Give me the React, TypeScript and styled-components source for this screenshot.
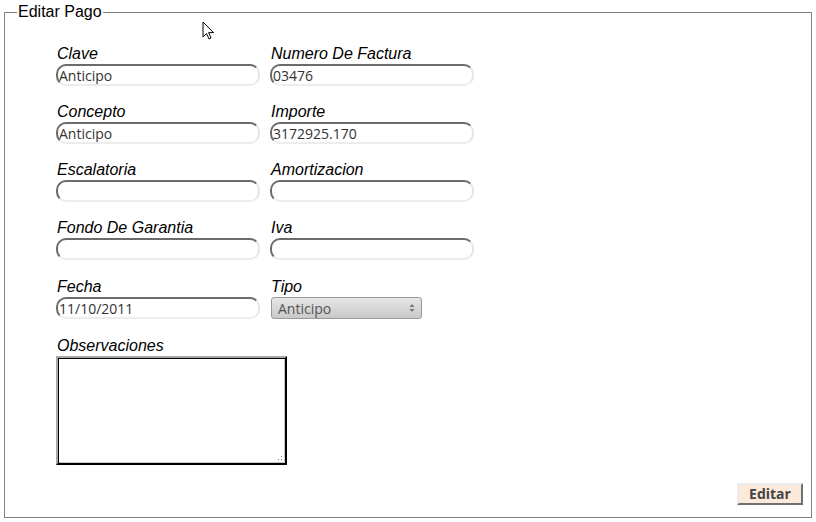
import React from "react";
import styled, { createGlobalStyle } from "styled-components";

const Global = createGlobalStyle`
  html, body { margin: 0; padding: 0; background: #fff; }
  body { font-family: "Liberation Sans", Arial, sans-serif; }
`;

const Page = styled.div`
  position: relative;
  width: 816px;
  height: 522px;
  padding: 3px 4px 0 4px;
  box-sizing: border-box;
`;

const Fieldset = styled.fieldset`
  margin: 0;
  width: 808px;
  height: 515px;
  box-sizing: border-box;
  border: 1px solid #808080;
  padding: 0 8px 12px 12px;
  display: flex;
  flex-direction: column;
`;

const Legend = styled.legend`
  font-family: "Liberation Sans", Arial, sans-serif;
  font-size: 16px;
  line-height: 18px;
  color: #000;
  padding: 0 1px;
`;

const Grid = styled.div`
  display: grid;
  grid-template-columns: 204px 204px;
  column-gap: 10px;
  row-gap: 17px;
  margin: 24px 0 0 39px;
  align-items: start;
`;

const Field = styled.div<{ $span?: boolean; $shift?: number }>`
  display: flex;
  flex-direction: column;
  grid-column: ${(p) => (p.$span ? "1 / span 2" : "auto")};
  margin-top: ${(p) => p.$shift ?? 0}px;
`;

const Label = styled.label`
  font-family: "Liberation Sans", Arial, sans-serif;
  font-style: italic;
  font-size: 16px;
  line-height: 18px;
  color: #000;
  padding-left: 1px;
  margin-bottom: 1px;
`;

const TextInput = styled.input`
  width: 204px;
  height: 22px;
  box-sizing: border-box;
  border-style: solid;
  border-width: 2px;
  border-color: #6b6b6b #e6e6e6 #ececec #6b6b6b;
  border-radius: 10px;
  background: #fff;
  padding: 0 0 0 1px;
  font-family: "Open Sans", "DejaVu Sans", sans-serif;
  font-size: 14px;
  color: #333;
  outline: none;
`;

const Select = styled.div`
  width: 151px;
  height: 22px;
  margin: 0 0 0 1px;
  box-sizing: border-box;
  border: 1px solid #9a9a9a;
  border-radius: 3px;
  background: linear-gradient(#e6e6e6, #c9c9c9);
  display: flex;
  align-items: center;
  justify-content: space-between;
  padding: 0 6px 0 6px;
  font-family: "Open Sans", "DejaVu Sans", sans-serif;
  font-size: 14px;
  color: #555;
`;

const Arrows = styled.svg`
  width: 6px;
  height: 10px;
`;

const TextArea = styled.textarea`
  display: block;
  width: 231px;
  height: 109px;
  box-sizing: border-box;
  margin: 0;
  border-style: solid;
  border-width: 2px;
  border-color: #a8a8a8 #000 #000 #a8a8a8;
  box-shadow: inset 1px 1px 0 #000, inset -1px -1px 0 #c8c8c8;
  background: #fff;
  resize: none;
  outline: none;
`;

const AreaWrap = styled.div`
  position: relative;
  width: 231px;
`;

const Grip = styled.svg`
  position: absolute;
  right: 5px;
  bottom: 5px;
  width: 4px;
  height: 4px;
`;

const Footer = styled.div`
  margin-top: auto;
  display: flex;
  justify-content: flex-end;
`;

const Button = styled.button`
  width: 66px;
  height: 22px;
  box-sizing: border-box;
  border-style: solid;
  border-width: 2px;
  border-color: #ececec #707070 #707070 #ececec;
  background: #fde9da;
  font-family: "Open Sans", "DejaVu Sans", sans-serif;
  font-weight: bold;
  font-size: 14px;
  color: #444;
  padding: 0;
  line-height: 16px;
`;

const Cursor = styled.svg`
  position: absolute;
  left: 202px;
  top: 21px;
  width: 13px;
  height: 20px;
`;

type F = { label: string; value?: string };

const rows: F[] = [
  { label: "Clave", value: "Anticipo" },
  { label: "Numero De Factura", value: "03476" },
  { label: "Concepto", value: "Anticipo" },
  { label: "Importe", value: "3172925.170" },
  { label: "Escalatoria" },
  { label: "Amortizacion" },
  { label: "Fondo De Garantia" },
  { label: "Iva" },
];

export default function App() {
  return (
    <>
      <Global />
      <Page>
        <Fieldset>
          <Legend>Editar Pago</Legend>
          <Grid>
            {rows.map((f) => (
              <Field key={f.label}>
                <Label>{f.label}</Label>
                <TextInput defaultValue={f.value ?? ""} />
              </Field>
            ))}
            <Field $shift={1}>
              <Label>Fecha</Label>
              <TextInput defaultValue="11/10/2011" />
            </Field>
            <Field $shift={1}>
              <Label>Tipo</Label>
              <Select>
                <span>Anticipo</span>
                <Arrows viewBox="0 0 6 10">
                  <path d="M0.5 4 L3 1 L5.5 4 Z M0.5 6 L3 9 L5.5 6 Z" fill="#777" />
                </Arrows>
              </Select>
            </Field>
            <Field $span $shift={1}>
              <Label>Observaciones</Label>
              <AreaWrap>
                <TextArea />
                <Grip viewBox="0 0 4 4">
                  <rect x="3" y="0" width="1" height="1" fill="#888" />
                  <rect x="0" y="3" width="1" height="1" fill="#888" />
                  <rect x="3" y="3" width="1" height="1" fill="#888" />
                </Grip>
              </AreaWrap>
            </Field>
          </Grid>
          <Footer>
            <Button>Editar</Button>
          </Footer>
        </Fieldset>
        <Cursor viewBox="0 0 13 20">
          <path d="M1 1 L1 16 L4.5 12.5 L7 18 L9 17 L6.6 11.6 L11.5 11.6 Z" fill="#fff" stroke="#000" strokeWidth="1" strokeLinejoin="miter" />
        </Cursor>
      </Page>
    </>
  );
}
